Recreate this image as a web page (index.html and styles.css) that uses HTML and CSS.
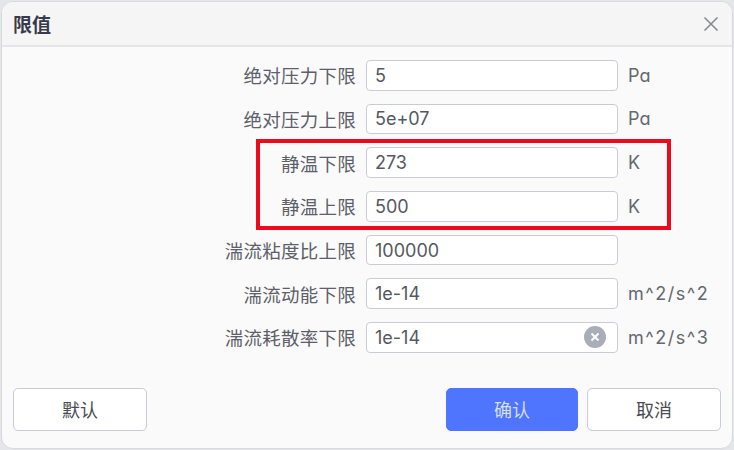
FILE: index.html
```html
<!DOCTYPE html>
<html>
<head>
  <link rel="stylesheet" href="styles.css">
</head>
<body>
  <div class="dialog">
    <div class="header">
      <span class="title">限值</span>
      <svg class="close" width="16" height="16" viewBox="0 0 16 16"><path d="M1.5 1.5 L14.5 14.5 M14.5 1.5 L1.5 14.5" /></svg>
    </div>
    <div class="form">
      <div class="row">
        <label>绝对压力下限</label>
        <div class="field">5</div>
        <span class="unit">Pa</span>
      </div>
      <div class="row">
        <label>绝对压力上限</label>
        <div class="field">5e+07</div>
        <span class="unit">Pa</span>
      </div>
      <div class="row">
        <label>静温下限</label>
        <div class="field">273</div>
        <span class="unit">K</span>
      </div>
      <div class="row">
        <label>静温上限</label>
        <div class="field">500</div>
        <span class="unit">K</span>
      </div>
      <div class="row">
        <label>湍流粘度比上限</label>
        <div class="field">100000</div>
        <span class="unit"></span>
      </div>
      <div class="row">
        <label>湍流动能下限</label>
        <div class="field">1e-14</div>
        <span class="unit wide">m^2/s^2</span>
      </div>
      <div class="row">
        <label>湍流耗散率下限</label>
        <div class="field">
          1e-14
          <svg class="clear" width="22" height="22" viewBox="0 0 22 22">
            <circle cx="11" cy="11" r="11" />
            <path d="M7.5 7.5 L14.5 14.5 M14.5 7.5 L7.5 14.5" />
          </svg>
        </div>
        <span class="unit wide">m^2/s^3</span>
      </div>
    </div>
    <div class="footer">
      <button class="btn">默认</button>
      <div class="footer-right">
        <button class="btn primary">确认</button>
        <button class="btn">取消</button>
      </div>
    </div>
    <div class="highlight"></div>
  </div>
</body>
</html>
```

FILE: styles.css
```css
body {
  margin: 0;
  width: 734px;
  height: 450px;
  overflow: hidden;
  background-color: #e4e6ea;
  font-family: "Inter", "Noto Sans CJK SC", sans-serif;
  font-feature-settings: "cv11";
  color: #55585f;
}

.dialog {
  position: relative;
  box-sizing: border-box;
  width: 732px;
  height: 448px;
  margin: 1px 0 0 1px;
  background-color: #fafafb;
  border: 1px solid #d8d9dd;
  border-radius: 12px;
  overflow: hidden;
}

.header {
  display: flex;
  justify-content: space-between;
  align-items: center;
  box-sizing: border-box;
  height: 45px;
  padding: 0 13px 0 11px;
  background-color: #f5f5f6;
  border-bottom: 2px solid #e6e6e8;
}

.title {
  font-family: "Noto Sans CJK SC", sans-serif;
  font-size: 19px;
  font-weight: 700;
  color: #363a4a;
}

.close path {
  stroke: #85878c;
  stroke-width: 1.5;
  fill: none;
}

.form {
  display: flex;
  flex-direction: column;
  gap: 13.2px;
  padding-top: 13px;
}

.row {
  display: flex;
  align-items: center;
  height: 30.5px;
}

label {
  width: 354px;
  text-align: right;
  font-family: "Noto Sans CJK SC", sans-serif;
  font-size: 18.5px;
  letter-spacing: 0.25px;
  color: #5d6068;
}

.field {
  display: flex;
  justify-content: space-between;
  align-items: center;
  box-sizing: border-box;
  width: 252px;
  height: 30.5px;
  margin-left: 10px;
  padding: 0 11px 0 8px;
  background-color: #fff;
  border: 1.5px solid #c9cbd5;
  border-radius: 4px;
  font-size: 18px;
  color: #55585f;
}

.unit {
  margin-left: 10px;
  font-size: 18px;
  color: #65686f;
}

.wide {
  letter-spacing: 1.5px;
}

.clear circle {
  fill: #a9adb8;
}

.clear path {
  stroke: #fff;
  stroke-width: 2;
  fill: none;
}

.footer {
  display: flex;
  justify-content: space-between;
  padding: 35.2px 11px 0 11px;
}

.footer-right {
  display: flex;
  gap: 9px;
}

.btn {
  box-sizing: border-box;
  width: 134px;
  height: 43px;
  background-color: #fff;
  border: 1.5px solid #c9cbd5;
  border-radius: 5px;
  font-family: "Noto Sans CJK SC", sans-serif;
  font-size: 18px;
  color: #4a4c52;
}

.primary {
  width: 132px;
  background-color: #4f75fe;
  border-color: #4f75fe;
  color: #d5dfff;
}

.highlight {
  position: absolute;
  left: 254px;
  top: 137px;
  width: 407px;
  height: 83px;
  border: 4px solid #ee0a1c;
}
```
